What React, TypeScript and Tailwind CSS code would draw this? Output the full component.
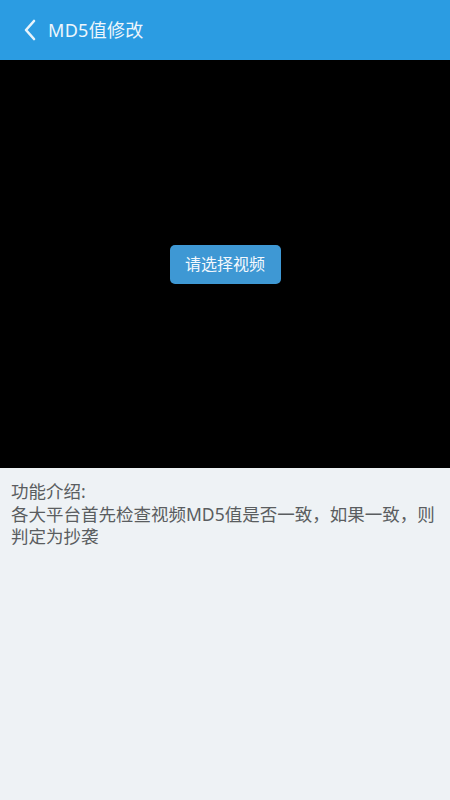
import React from "react";

export default function App() {
  const font = { fontFamily: '"Noto Sans", "Noto Sans CJK SC", sans-serif' };
  return (
    <div className="w-[450px] h-[800px] flex flex-col bg-[#eef2f5]" style={font}>
      <div className="h-[60px] bg-[#2b9ce2] flex items-center pl-[22px] shrink-0">
        <svg width="16" height="22" viewBox="0 0 16 22" className="mr-[10px]">
          <path d="M12 2 L4 11 L12 20" fill="none" stroke="#e8f4fc" strokeWidth="2.6" strokeLinecap="round" strokeLinejoin="round" />
        </svg>
        <span className="text-[18px] text-[#eef6fc] leading-none tracking-[0.3px]">MD5值修改</span>
      </div>
      <div className="h-[408px] bg-black flex items-center justify-center shrink-0">
        <button className="w-[111px] h-[39px] rounded-[5px] bg-[#3e98d4] text-[#f4f9fd] text-[16px] leading-none">
          请选择视频
        </button>
      </div>
      <div className="flex-1 px-[11px] pt-[12px] text-[17.5px] leading-[22.5px] text-[#5a5d60]">
        <div>功能介绍:</div>
        <div>各大平台首先检查视频MD5值是否一致，如果一致，则判定为抄袭</div>
      </div>
    </div>
  );
}
